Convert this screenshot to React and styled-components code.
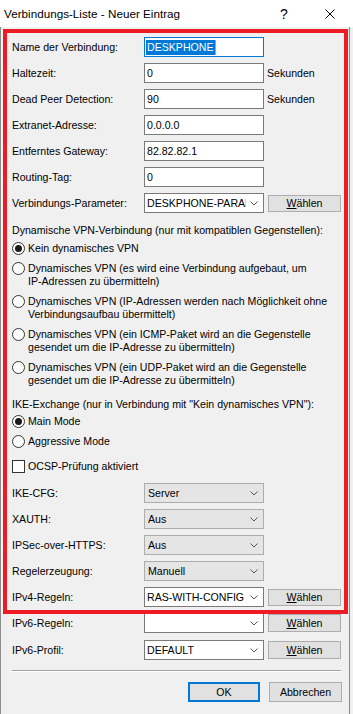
import React from 'react';
import styled, { createGlobalStyle } from 'styled-components';

const GlobalStyle = createGlobalStyle`
	html, body {
		margin: 0;
		padding: 0;
		background: #f0f0f0;
	}
	body {
		font-family: "Liberation Sans", Arial, sans-serif;
		font-size: 10.6px;
		color: #000;
	}
`;

const Page = styled.div`
	width: 353px;
	height: 714px;
	display: flex;
	flex-direction: column;
	background: #f0f0f0;
	overflow: hidden;
`;

const TitleBar = styled.div`
	height: 27px;
	background: #ffffff;
	display: flex;
	align-items: center;
	flex-shrink: 0;
`;

const Title = styled.div`
	flex: 1;
	padding-left: 4px;
	font-size: 11.7px;
	color: #000;
	white-space: nowrap;
`;

const CaptionButton = styled.div`
	width: 46px;
	height: 27px;
	display: flex;
	align-items: center;
	justify-content: center;
	font-size: 14px;
	color: #000;
`;

const Window = styled.div`
	width: 348px;
	flex: 1;
	border-left: 1px solid #8c8c8c;
	border-right: 1px solid #8c8c8c;
	display: flex;
	flex-direction: column;
	padding-top: 2px;
`;

const Highlight = styled.div`
	margin: 0 1px -1px 2px;
	border: 4px solid #ed1c24;
	padding: 4px 0 3px 5px;
	display: flex;
	flex-direction: column;
	position: relative;
`;

const Lower = styled.div`
	padding-left: 11px;
	display: flex;
	flex-direction: column;
`;

const Row = styled.div`
	height: 20px;
	display: flex;
	align-items: center;
	margin-top: ${p => p.$top || 0}px;
	flex-shrink: 0;
`;

const Label = styled.div`
	width: 132px;
	flex-shrink: 0;
	white-space: nowrap;
`;

const TextBox = styled.div`
	width: 120px;
	height: 20px;
	box-sizing: border-box;
	border: 1px solid ${p => (p.$focused ? '#0078d7' : '#7a7a7a')};
	background: #ffffff;
	display: flex;
	align-items: center;
	padding-left: ${p => (p.$focused ? 1 : 2)}px;
	white-space: nowrap;
	overflow: hidden;
`;

const Selected = styled.span`
	background: #0078d7;
	color: #ffffff;
	height: 15px;
	line-height: 15px;
	padding: 0 1px;
`;

const Caret = styled.span`
	width: 1px;
	height: 15px;
	background: #f7941d;
`;

const Unit = styled.div`
	margin-left: 3px;
`;

const Combo = styled.div`
	width: 120px;
	height: 20px;
	box-sizing: border-box;
	border: 1px solid ${p => (p.$flat ? '#adadad' : '#7a7a7a')};
	background: ${p => (p.$flat ? '#e5e5e5' : '#ffffff')};
	display: flex;
	align-items: center;
	padding-left: ${p => (p.$flat ? 3 : 2)}px;
	padding-right: 5px;
`;

const ComboText = styled.div`
	flex: 1;
	overflow: hidden;
	white-space: nowrap;
	min-width: 0;
	margin-right: 4px;
`;

const Button = styled.div`
	width: ${p => p.$w || 73}px;
	height: ${p => p.$h || 18}px;
	box-sizing: border-box;
	border: ${p => (p.$default ? '2px solid #0078d7' : '1px solid #adadad')};
	background: #e1e1e1;
	display: flex;
	align-items: center;
	justify-content: center;
	margin-left: ${p => p.$left || 0}px;
	flex-shrink: 0;
	line-height: 13px;
`;

const GroupText = styled.div`
	line-height: 13px;
	margin-top: ${p => p.$top || 0}px;
	white-space: nowrap;
`;

const Option = styled.div`
	display: flex;
	align-items: flex-start;
	line-height: 13px;
	margin-top: ${p => p.$top || 0}px;
	white-space: nowrap;
`;

const RadioCircle = styled.span`
	width: 13px;
	height: 13px;
	box-sizing: border-box;
	border: 1px solid #333333;
	border-radius: 50%;
	background: #ffffff;
	margin-right: 3px;
	flex-shrink: 0;
	display: flex;
	align-items: center;
	justify-content: center;

	&::after {
		content: '';
		display: ${p => (p.$checked ? 'block' : 'none')};
		width: 7px;
		height: 7px;
		border-radius: 50%;
		background: #1a1a1a;
	}
`;

const CheckSquare = styled.span`
	width: 13px;
	height: 13px;
	box-sizing: border-box;
	border: 1px solid #333333;
	background: #ffffff;
	margin-right: 3px;
	flex-shrink: 0;
`;

const Separator = styled.div`
	width: 329px;
	height: 1px;
	background: #a0a0a0;
	border-bottom: 1px solid #ffffff;
	margin-top: 10px;
`;

const Footer = styled.div`
	width: 330px;
	display: flex;
	justify-content: flex-end;
	margin-top: 10px;
`;

const Chevron = () => (
	<svg width='8' height='5' viewBox='0 0 8 5'>
		<polyline points='0.5,0.5 4,4 7.5,0.5' fill='none' stroke='#555' strokeWidth='1' />
	</svg>
);

const CloseIcon = () => (
	<svg width='10' height='10' viewBox='0 0 10 10'>
		<path d='M0.5 0.5 L9.5 9.5 M9.5 0.5 L0.5 9.5' stroke='#000' strokeWidth='1' />
	</svg>
);

const Wahlen = ({ left = 4, h = 18 }) => (
	<Button $left={left} $h={h}>
		<span>
			<u>W</u>ählen
		</span>
	</Button>
);

const Radio = ({ checked, top, children }) => (
	<Option $top={top}>
		<RadioCircle $checked={checked} />
		<span>{children}</span>
	</Option>
);

const Select = ({ value, flat }) => (
	<Combo $flat={flat}>
		<ComboText>{value}</ComboText>
		<Chevron />
	</Combo>
);

const fields = [
	['Haltezeit:', '0', 'Sekunden'],
	['Dead Peer Detection:', '90', 'Sekunden'],
	['Extranet-Adresse:', '0.0.0.0'],
	['Entferntes Gateway:', '82.82.82.1'],
	['Routing-Tag:', '0'],
];

const dropdowns = [
	['IKE-CFG:', 'Server'],
	['XAUTH:', 'Aus'],
	['IPSec-over-HTTPS:', 'Aus'],
	['Regelerzeugung:', 'Manuell'],
];

export default function App() {
	return (
		<Page>
			<GlobalStyle />
			<TitleBar>
				<Title>Verbindungs-Liste - Neuer Eintrag</Title>
				<CaptionButton>?</CaptionButton>
				<CaptionButton>
					<CloseIcon />
				</CaptionButton>
			</TitleBar>

			<Window>
				<Highlight>
					<Row>
						<Label>Name der Verbindung:</Label>
						<TextBox $focused>
							<Selected>DESKPHONE</Selected>
							<Caret />
						</TextBox>
					</Row>

					{fields.map(([label, value, unit]) => (
						<Row key={label} $top={6}>
							<Label>{label}</Label>
							<TextBox>{value}</TextBox>
							{unit && <Unit>{unit}</Unit>}
						</Row>
					))}

					<Row $top={6}>
						<Label>Verbindungs-Parameter:</Label>
						<Select value='DESKPHONE-PARAMETER' />
						<Wahlen h={17} />
					</Row>

					<GroupText $top={11}>Dynamische VPN-Verbindung (nur mit kompatiblen Gegenstellen):</GroupText>
					<Radio checked top={5}>
						Kein dynamisches VPN
					</Radio>
					<Radio top={7}>
						Dynamisches VPN (es wird eine Verbindung aufgebaut, um
						<br />
						IP-Adressen zu übermitteln)
					</Radio>
					<Radio top={7}>
						Dynamisches VPN (IP-Adressen werden nach Möglichkeit ohne
						<br />
						Verbindungsaufbau übermittelt)
					</Radio>
					<Radio top={7}>
						Dynamisches VPN (ein ICMP-Paket wird an die Gegenstelle
						<br />
						gesendet um die IP-Adresse zu übermitteln)
					</Radio>
					<Radio top={7}>
						Dynamisches VPN (ein UDP-Paket wird an die Gegenstelle
						<br />
						gesendet um die IP-Adresse zu übermitteln)
					</Radio>

					<GroupText $top={11}>IKE-Exchange (nur in Verbindung mit "Kein dynamisches VPN"):</GroupText>
					<Radio checked top={4}>
						Main Mode
					</Radio>
					<Radio top={7}>Aggressive Mode</Radio>

					<Option $top={12}>
						<CheckSquare />
						<span>OCSP-Prüfung aktiviert</span>
					</Option>

					{dropdowns.map(([label, value], i) => (
						<Row key={label} $top={i === 0 ? 10 : 6}>
							<Label>{label}</Label>
							<Select value={value} flat />
						</Row>
					))}

					<Row $top={6}>
						<Label>IPv4-Regeln:</Label>
						<Select value='RAS-WITH-CONFIG' />
						<Wahlen h={17} />
					</Row>
				</Highlight>

				<Lower>
					<Row>
						<Label>IPv6-Regeln:</Label>
						<Select value='' />
						<Wahlen />
					</Row>
					<Row $top={7}>
						<Label>IPv6-Profil:</Label>
						<Select value='DEFAULT' />
						<Wahlen />
					</Row>

					<Separator />

					<Footer>
						<Button $default $w={72} $h={20}>
							OK
						</Button>
						<Button $w={73} $h={20} $left={9}>
							Abbrechen
						</Button>
					</Footer>
				</Lower>
			</Window>
		</Page>
	);
}
